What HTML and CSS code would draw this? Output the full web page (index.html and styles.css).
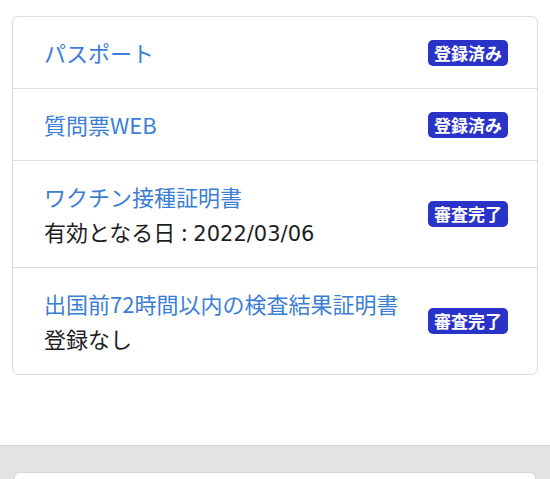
FILE: index.html
```html
<!DOCTYPE html>
<html lang="ja">
<head>
    <meta charset="utf-8">
    <title>書類の登録状況</title>
    <meta name="viewport" content="width=device-width, initial-scale=1">
    <link rel="stylesheet" href="styles.css">
</head>
<body>
    <div class="doc-list">
        <div class="doc-row">
            <div class="doc-info">
                <a class="doc-title" href="#">パスポート</a>
            </div>
            <span class="badge">登録済み</span>
        </div>
        <div class="doc-row">
            <div class="doc-info">
                <a class="doc-title" href="#">質問票WEB</a>
            </div>
            <span class="badge">登録済み</span>
        </div>
        <div class="doc-row">
            <div class="doc-info">
                <a class="doc-title" href="#">ワクチン接種証明書</a>
                <div class="doc-note">有効となる日 : <span class="doc-date">2022/03/06</span></div>
            </div>
            <span class="badge">審査完了</span>
        </div>
        <div class="doc-row">
            <div class="doc-info">
                <a class="doc-title" href="#">出国前72時間以内の検査結果証明書</a>
                <div class="doc-note">登録なし</div>
            </div>
            <span class="badge">審査完了</span>
        </div>
    </div>

    <div class="footer-area">
        <div class="footer-card"></div>
    </div>
</body>
</html>
```

FILE: styles.css
```css
body {
    margin: 0;
    background-color: #ffffff;
    font-family: "Noto Sans CJK JP", "Noto Sans", sans-serif;
    color: #222222;
    overflow: hidden;
}

.doc-list {
    margin: 16px 12px 0;
    border: 1px solid #dcdcdc;
    border-radius: 6px;
}

.doc-row {
    display: flex;
    align-items: center;
    justify-content: space-between;
    padding: 18px 29px 18px 31px;
    border-top: 1px solid #dcdcdc;
}

.doc-row:first-child {
    border-top: none;
}

.doc-info {
    display: flex;
    flex-direction: column;
}

.doc-title {
    font-size: 22px;
    line-height: 35px;
    color: #3b7ed6;
    text-decoration: none;
}

.doc-note {
    height: 35px;
    font-size: 22px;
    line-height: 35px;
    color: #1e1e1e;
    word-spacing: 1px;
}

.doc-date {
    font-family: "DejaVu Sans", sans-serif;
    font-size: 21px;
    line-height: 1;
}

.badge {
    flex-shrink: 0;
    padding: 0 6px;
    font-size: 17px;
    font-weight: bold;
    line-height: 26px;
    color: #ffffff;
    background-color: #2a33c8;
    border-radius: 5px;
}

.footer-area {
    margin-top: 70px;
    padding: 26px 14px 0;
    height: 60px;
    background-color: #e3e3e3;
    border-top: 1px solid #d5d5d5;
}

.footer-card {
    height: 100px;
    background-color: #ffffff;
    border: 1px solid #d6d6d6;
    border-radius: 6px;
}
```
